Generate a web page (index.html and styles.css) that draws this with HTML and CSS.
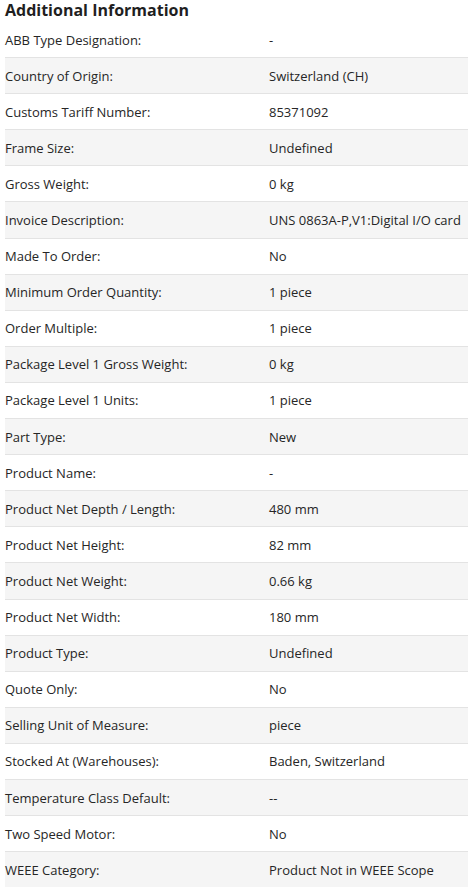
FILE: index.html
```html
<!DOCTYPE html>
<html>
<head>
<meta charset="utf-8">
<link rel="stylesheet" href="styles.css">
</head>
<body>
<div class="info">
  <h2 class="title">Additional Information</h2>
  <div class="table">
    <div class="row"><div class="label">ABB Type Designation:</div><div class="value">-</div></div>
    <div class="row"><div class="label">Country of Origin:</div><div class="value">Switzerland (CH)</div></div>
    <div class="row"><div class="label">Customs Tariff Number:</div><div class="value">85371092</div></div>
    <div class="row"><div class="label">Frame Size:</div><div class="value">Undefined</div></div>
    <div class="row"><div class="label">Gross Weight:</div><div class="value">0 kg</div></div>
    <div class="row"><div class="label">Invoice Description:</div><div class="value">UNS 0863A-P,V1:Digital I/O card</div></div>
    <div class="row"><div class="label">Made To Order:</div><div class="value">No</div></div>
    <div class="row"><div class="label">Minimum Order Quantity:</div><div class="value">1 piece</div></div>
    <div class="row"><div class="label">Order Multiple:</div><div class="value">1 piece</div></div>
    <div class="row"><div class="label">Package Level 1 Gross Weight:</div><div class="value">0 kg</div></div>
    <div class="row"><div class="label">Package Level 1 Units:</div><div class="value">1 piece</div></div>
    <div class="row"><div class="label">Part Type:</div><div class="value">New</div></div>
    <div class="row"><div class="label">Product Name:</div><div class="value">-</div></div>
    <div class="row"><div class="label">Product Net Depth / Length:</div><div class="value">480 mm</div></div>
    <div class="row"><div class="label">Product Net Height:</div><div class="value">82 mm</div></div>
    <div class="row"><div class="label">Product Net Weight:</div><div class="value">0.66 kg</div></div>
    <div class="row"><div class="label">Product Net Width:</div><div class="value">180 mm</div></div>
    <div class="row"><div class="label">Product Type:</div><div class="value">Undefined</div></div>
    <div class="row"><div class="label">Quote Only:</div><div class="value">No</div></div>
    <div class="row"><div class="label">Selling Unit of Measure:</div><div class="value">piece</div></div>
    <div class="row"><div class="label">Stocked At (Warehouses):</div><div class="value">Baden, Switzerland</div></div>
    <div class="row"><div class="label">Temperature Class Default:</div><div class="value">--</div></div>
    <div class="row"><div class="label">Two Speed Motor:</div><div class="value">No</div></div>
    <div class="row"><div class="label">WEEE Category:</div><div class="value">Product Not in WEEE Scope</div></div>
  </div>
</div>
</body>
</html>
```
FILE: styles.css
```css
html, body {
  margin: 0;
  padding: 0;
  background: #ffffff;
}
body {
  font-family: "Open Sans", "Noto Sans", sans-serif;
  color: #262626;
}
.info {
  padding-left: 5px;
}
.title {
  margin: 0;
  height: 22px;
  font-size: 16px;
  line-height: 20px;
  font-weight: 700;
  color: #1f1f1f;
  white-space: nowrap;
}
.table {
  display: flex;
  flex-direction: column;
}
.row {
  display: grid;
  grid-template-columns: 264px 1fr;
  align-items: center;
  height: 36.1px;
  box-sizing: border-box;
  font-size: 13px;
  border-top: 1px solid #e3e3e3;
}
.row:first-child {
  border-top: none;
  height: 35.1px;
}
.row:nth-child(even) {
  background: #f5f5f5;
}
.label, .value {
  white-space: nowrap;
}
```
